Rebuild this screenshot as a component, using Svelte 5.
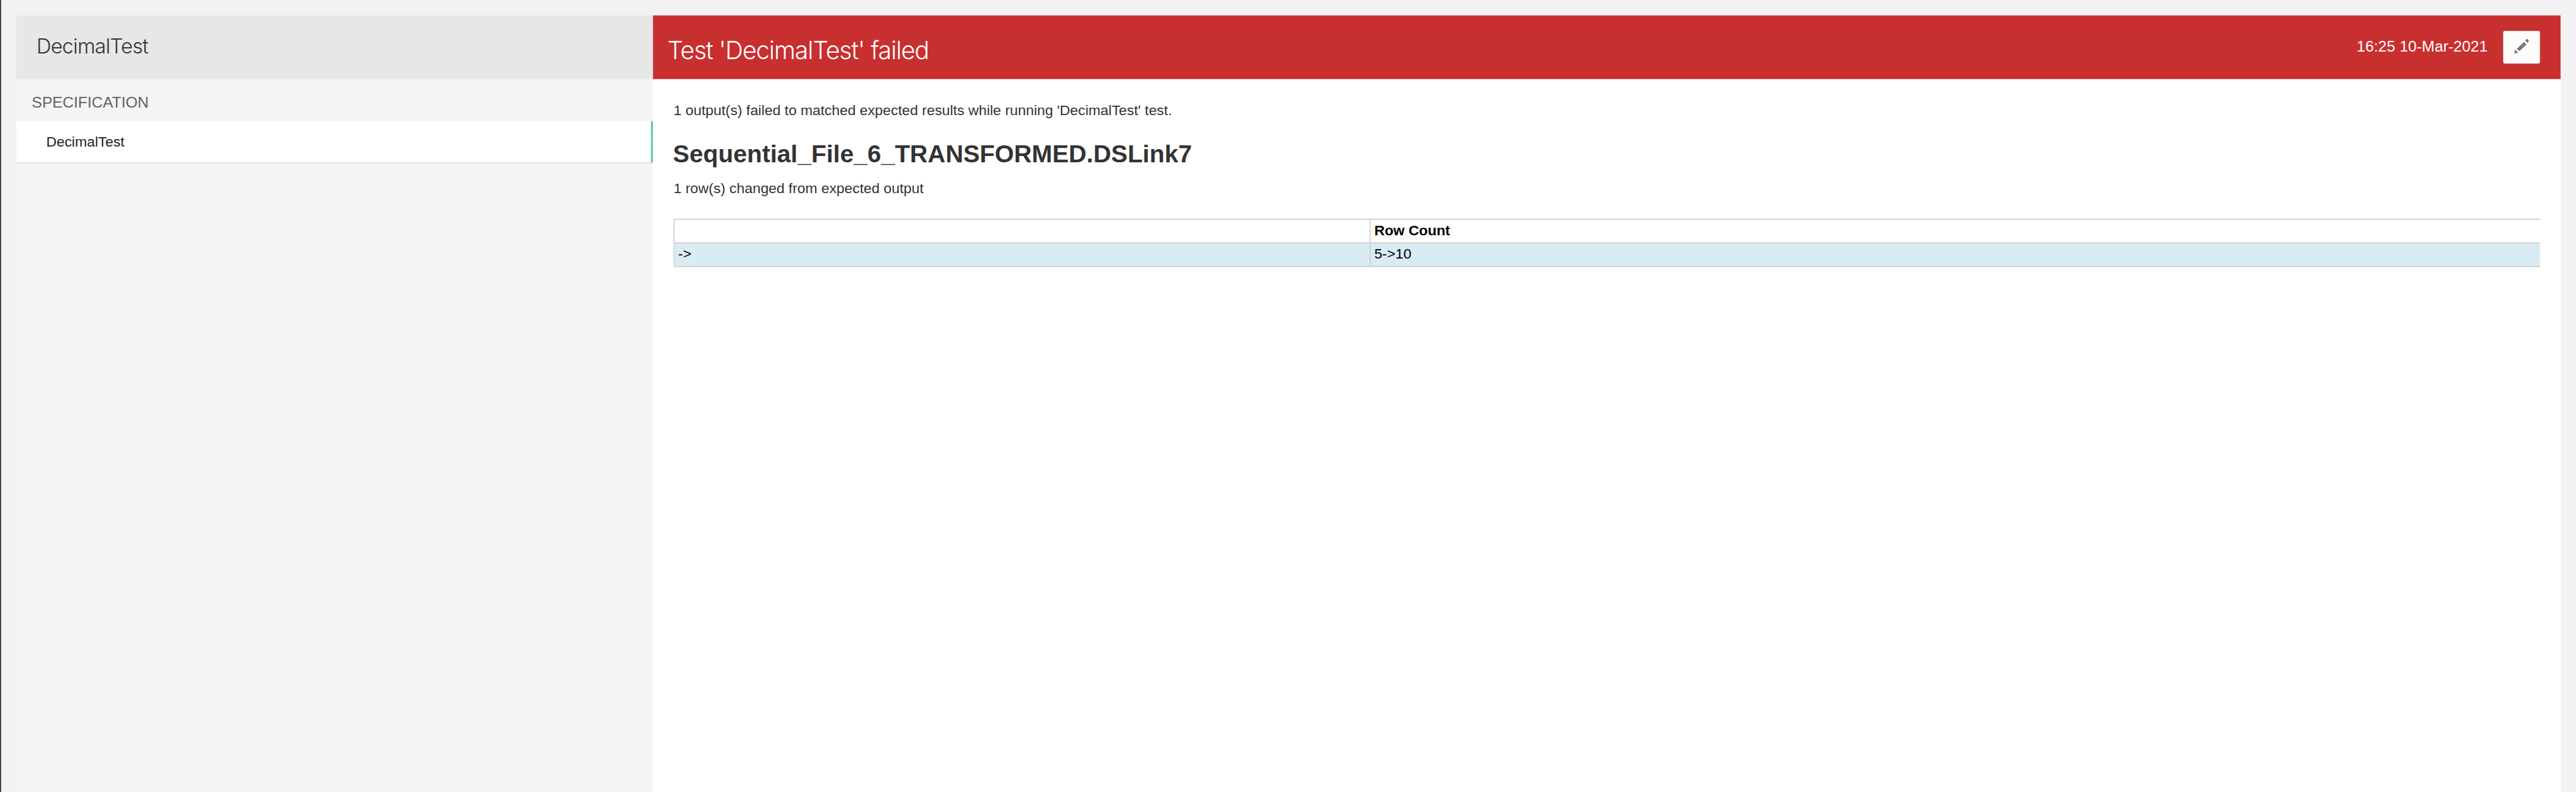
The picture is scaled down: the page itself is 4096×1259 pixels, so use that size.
<script>
  const suite = 'DecimalTest';
  const specs = ['DecimalTest'];
  const columns = ['', 'Row Count'];
  const rows = [['->', '5->10']];
</script>

<div class="viewport">
  <div class="page">
    <aside class="sidebar">
      <header class="suite">{suite}</header>
      <div class="group">SPECIFICATION</div>
      {#each specs as spec}
        <div class="spec">{spec}</div>
      {/each}
    </aside>
    <main class="report">
      <header class="banner">
        <h1>Test '{suite}' failed</h1>
        <time>16:25 10-Mar-2021</time>
        <button class="edit" aria-label="Edit">
          <svg viewBox="0 0 216 192" aria-hidden="true">
            <path d="M65 132 L70 110 L89 127 Z" />
            <path d="M80 106 L122 65 L137 80 L95 119 Z" />
            <path d="M129 57 L136 49 Q139 46 143 49 L149 56 Q152 60 149 63 L142 70 Z" />
          </svg>
        </button>
      </header>
      <section class="body">
        <p class="summary">1 output(s) failed to matched expected results while running '{suite}' test.</p>
        <h2>Sequential_File_6_TRANSFORMED.DSLink7</h2>
        <p class="detail">1 row(s) changed from expected output</p>
        <div class="table">
          <div class="row head">
            {#each columns as column}<div class="cell">{column}</div>{/each}
          </div>
          {#each rows as row}
            <div class="row changed">
              {#each row as value}<div class="cell">{value}</div>{/each}
            </div>
          {/each}
        </div>
      </section>
    </main>
  </div>
</div>

<style>
  :global(body) { background: #f2f2f2; }
  .viewport { width: 4096px; height: 1259px; overflow: hidden; }
  .page {
    box-sizing: border-box;
    display: flex;
    width: 5018px;
    height: 1543px;
    padding: 30px 30px 0 30px;
    border-left: 2px solid #282832;
    background: #f2f2f2;
    color: #333;
    font-family: "Liberation Sans", Arial, sans-serif;
    font-size: 28px;
    transform: scale(0.81626);
    transform-origin: 0 0;
    white-space: nowrap;
  }
  .sidebar { width: 1240px; flex: none; background: #f4f4f4; }
  .suite {
    height: 124px;
    box-sizing: border-box;
    padding-left: 39px;
    background: #e7e7e7;
    font: 300 40px/120px Inter, sans-serif;
    letter-spacing: -0.95px;
  }
  .group {
    height: 82px;
    box-sizing: border-box;
    padding: 9px 0 0 30px;
    color: #616161;
    font-size: 30px;
    line-height: 74px;
  }
  .spec {
    box-sizing: border-box;
    height: 82px;
    padding-left: 58px;
    background: linear-gradient(#5ad197, #5ad197) right top / 4px 80px no-repeat, #fff;
    border-bottom: 2px solid #ddd;
    color: #222;
    line-height: 82px;
  }
  .report { flex: 1; min-width: 0; background: #fff; }
  .banner {
    display: flex;
    height: 124px;
    box-sizing: border-box;
    padding: 0 40px 0 28px;
    background: #c82f2f;
    color: #fff;
  }
  h1 {
    flex: 1;
    margin: 0;
    padding-top: 10px;
    font: 300 48px/115px Inter, sans-serif;
    letter-spacing: -1.37px;
  }
  time { margin-right: 30px; font-size: 30px; line-height: 120px; }
  .edit {
    box-sizing: border-box;
    width: 72px;
    height: 64px;
    margin-top: 30px;
    padding: 0;
    border: 2px solid #e6e6e6;
    border-radius: 4px;
    background: #fcfcfc;
  }
  .edit svg { display: block; width: 72px; height: 64px; margin: -2px; fill: #777; }
  .body { padding: 40px 40px 0; }
  p { margin: 0; line-height: 42px; }
  h2 { margin: 33px 0 15px -1px; font-size: 48px; font-weight: 700; line-height: 62px; }
  .table { margin-top: 38px; border-top: 2px solid #ccc; border-left: 2px solid #ccc; color: #000; }
  .row { display: grid; grid-template-columns: 1356px 1fr; height: 44px; border-bottom: 2px solid #ccc; }
  .cell { box-sizing: border-box; padding-left: 7px; line-height: 42px; }
  .cell:first-child { border-right: 2px solid #ccc; }
  .head { font-weight: 700; }
  .changed { background: #d9ecf4; }
</style>
